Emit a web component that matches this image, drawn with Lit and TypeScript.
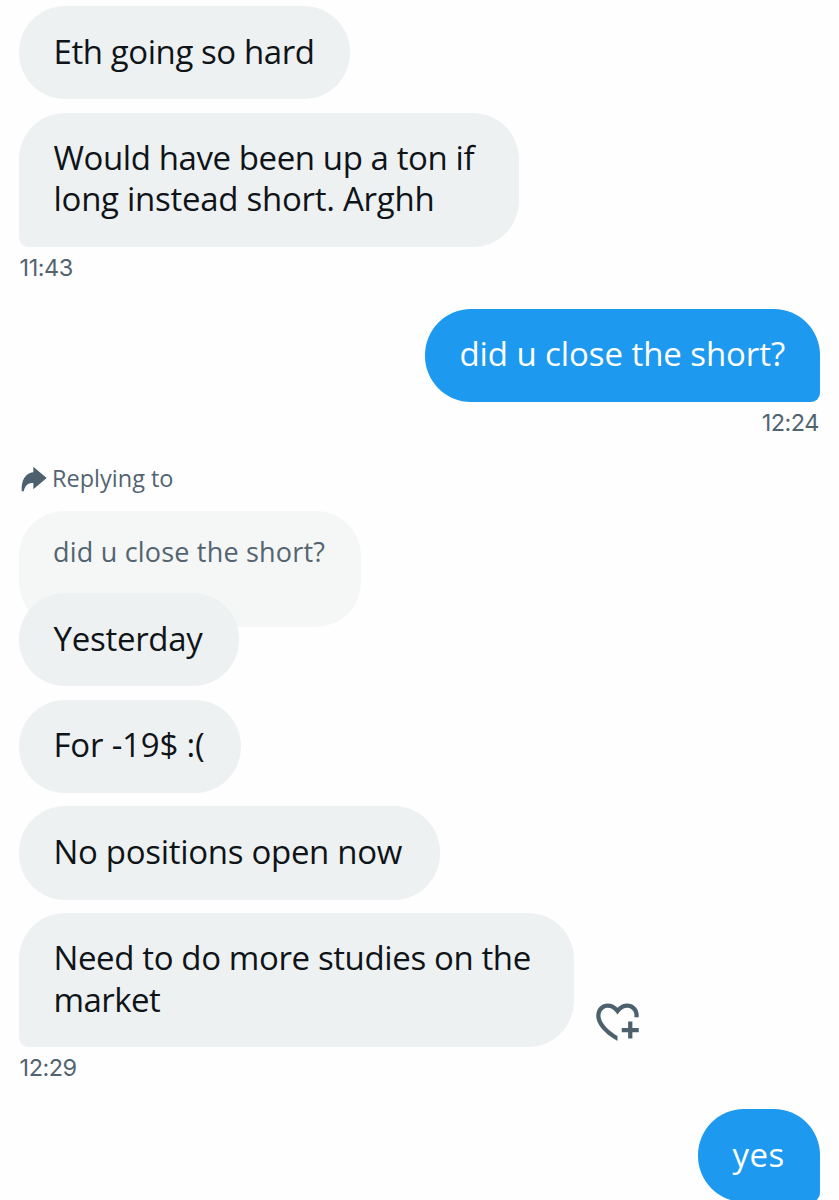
import { LitElement, html, css } from "lit";
import { classMap } from "lit/directives/class-map.js";

interface Line { text: string; tracking: number; }
interface Message { lines: Line[]; width: number; sent?: boolean; tail?: boolean; time?: string; timeTracking?: number; react?: boolean; quote?: boolean; }

const MESSAGES: Message[] = [
  { lines: [{ text: "Eth going so hard", tracking: -0.42 }], width: 331 },
  {
    lines: [
      { text: "Would have been up a ton if", tracking: -0.41 },
      { text: "long instead short. Arghh", tracking: -0.27 },
    ],
    width: 500, tail: true, time: "11:43", timeTracking: -0.5,
  },
  { lines: [{ text: "did u close the short?", tracking: -0.08 }], width: 395, sent: true, tail: true, time: "12:24", timeTracking: -0.5 },
  { lines: [{ text: "Yesterday", tracking: -0.27 }], width: 220, quote: true },
  { lines: [{ text: "For -19$ :(", tracking: -0.2 }], width: 222 },
  { lines: [{ text: "No positions open now", tracking: -0.3 }], width: 421 },
  {
    lines: [
      { text: "Need to do more studies on the", tracking: -0.38 },
      { text: "market", tracking: -0.55 },
    ],
    width: 555, tail: true, time: "12:29", timeTracking: -0.5, react: true,
  },
  { lines: [{ text: "yes", tracking: 0.47 }], width: 122, sent: true, tail: true },
];

class AppRoot extends LitElement {
  static styles = css`
    :host {
      display: block;
      height: 1200px;
      overflow: hidden;
      background: #fefefe;
      font-family: "Open Sans", "Noto Sans", sans-serif;
      color: #0f1419;
    }
    .thread {
      display: flex;
      flex-direction: column;
      padding: 6px 19px 0;
    }
    .message {
      display: flex;
      flex-direction: column;
      align-items: flex-start;
      margin-bottom: 13.3px;
    }
    .message.timed { margin-bottom: 24.6px; }
    .message.sent { align-items: flex-end; }
    .row { display: flex; align-items: flex-end; }
    .bubble {
      box-sizing: border-box;
      flex: none;
      padding: 24.5px 0 27.5px 34.5px;
      border-radius: 46px;
      background: #eef1f2;
      font-size: 33px;
      line-height: 41.3px;
      white-space: nowrap;
    }
    .tail .bubble { border-bottom-left-radius: 9px; }
    .sent .bubble { background: #1e99f0; color: #fff; }
    .sent.tail .bubble { border-bottom-left-radius: 46px; border-bottom-right-radius: 9px; }
    .line { display: block; }
    .time {
      margin-top: 5px;
      padding-left: 0.6px;
      height: 32px;
      line-height: 32px;
      font-family: Inter, "Open Sans", sans-serif;
      font-size: 23.5px;
      color: #536471;
    }
    .sent .time { padding-right: 1px; }
    .replying {
      display: flex;
      align-items: center;
      gap: 5px;
      height: 32px;
      margin: -0.6px 0 16px 2px;
      font-size: 23.5px;
      line-height: 32px;
      color: #536471;
    }
    .arrow { width: 26px; height: 26px; fill: #4d606e; margin-top: -1px; }
    .label { margin-top: -2px; }
    .quote {
      box-sizing: border-box;
      width: 342px;
      height: 116px;
      padding: 24px 0 0 34px;
      margin-bottom: -34px;
      border-radius: 45px;
      background: #f5f7f7;
      color: #536471;
      font-size: 27px;
      line-height: 34px;
      letter-spacing: 0.2px;
      white-space: nowrap;
    }
    .heart { width: 51px; height: 51px; fill: #4d606e; margin-left: 17.5px; }
  `;

  private replyHeader() {
    return html`
      <div class="replying">
        <svg class="arrow" viewBox="63 31 78 78"><path d="M100 33 140 67 100 101V82C85 81 76 88 71 107H65C63 74 76 52 100 50Z"/></svg>
        <span class="label">Replying to</span>
      </div>
      <div class="quote">did u close the short?</div>
    `;
  }

  private heart() {
    return html`<svg class="heart" viewBox="0 0 24 24"><path d="M17 12v3h-2.998v2h3v3h2v-3h3v-2h-3.001v-3H17zm-5 6.839c-3.871-2.34-6.053-4.639-7.127-6.609-1.112-2.04-1.031-3.7-.479-4.82.561-1.13 1.667-1.84 2.91-1.91 1.222-.06 2.68.51 3.892 2.16l.806 1.09.805-1.09c1.211-1.65 2.668-2.22 3.89-2.16 1.242.07 2.347.78 2.908 1.91.334.677.49 1.554.321 2.59h2.011c.153-1.283-.039-2.469-.539-3.48-.887-1.79-2.647-2.91-4.601-3.01-1.65-.09-3.367.56-4.796 2.01-1.43-1.45-3.147-2.1-4.798-2.01-1.954.1-3.714 1.22-4.601 3.01-.896 1.81-.846 4.17.514 6.67 1.353 2.48 4.003 5.12 8.382 7.67l.502.299v-2.32z"/></svg>`;
  }

  private message(m: Message) {
    return html`
      <div class=${classMap({ message: true, sent: !!m.sent, tail: !!m.tail, timed: !!m.time })}>
        ${m.quote ? this.replyHeader() : ""}
        <div class="row">
          <div class="bubble" style="width:${m.width}px">${m.lines.map((l) => html`<span class="line" style="letter-spacing:${l.tracking}px">${l.text}</span>`)}</div>
          ${m.react ? this.heart() : ""}
        </div>
        ${m.time ? html`<div class="time" style="letter-spacing:${m.timeTracking}px">${m.time}</div>` : ""}
      </div>
    `;
  }

  render() {
    return html`<div class="thread">${MESSAGES.map((m) => this.message(m))}</div>`;
  }
}
customElements.define("app-root", AppRoot);
